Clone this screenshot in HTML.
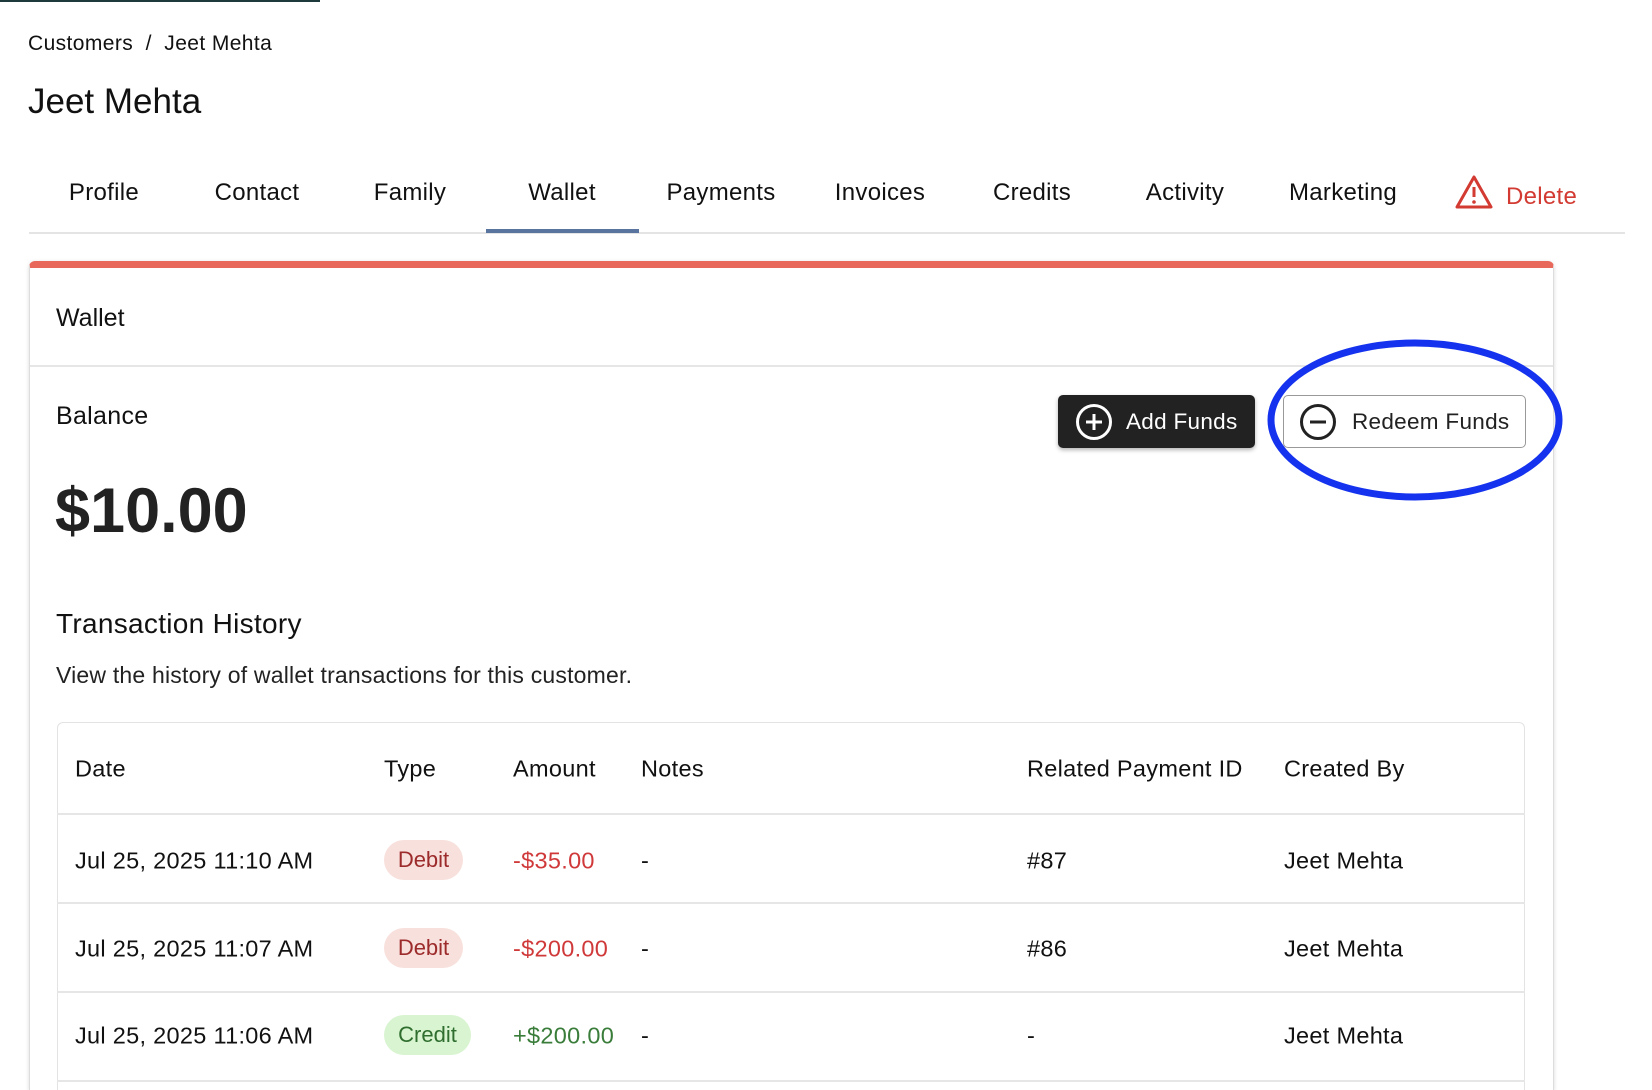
<!DOCTYPE html>
<html style="width:1652px;height:1090px;overflow:hidden"><head><meta charset="utf-8"><style>
*{box-sizing:border-box;margin:0;padding:0}
body{width:1652px;height:1090px;overflow:hidden;background:#fff;font-family:"Liberation Sans",Arial,sans-serif;color:#111;position:relative}
.a{position:absolute;white-space:nowrap}
.tab{position:absolute;top:179px;font-size:24px;letter-spacing:.3px;transform:translateX(-50%)}
.card{position:absolute;left:29px;top:261px;width:1525px;height:829px;border:1px solid #ddd;border-bottom:none;border-top:7px solid #e8695c;border-radius:6px 6px 0 0;box-shadow:0 1px 4px rgba(0,0,0,.15)}
.tbl{position:absolute;left:57px;top:722px;width:1468px;height:368px;border:1px solid #e3e3e3;border-bottom:none;border-radius:6px 6px 0 0}
.hl{position:absolute;left:57px;width:1468px;height:2px;background:#e6e6e6}
.t{position:absolute;font-size:23.5px;letter-spacing:.3px;transform:translateY(-50%)}
.badge{position:absolute;height:40px;border-radius:20px;font-size:22px;line-height:40px;text-align:center;transform:translateY(-50%)}
</style></head><body>
<div class="a" style="left:0;top:0;width:320px;height:2px;background:#1e3a3a"></div>
<div class="a" style="left:28px;top:32px;font-size:21px;letter-spacing:.4px">Customers&nbsp;&nbsp;/&nbsp;&nbsp;Jeet Mehta</div>
<div class="a" style="left:28px;top:82px;font-size:35px">Jeet Mehta</div>
<div class="tab" style="left:104px">Profile</div>
<div class="tab" style="left:257px">Contact</div>
<div class="tab" style="left:410px">Family</div>
<div class="tab" style="left:562px">Wallet</div>
<div class="tab" style="left:721px">Payments</div>
<div class="tab" style="left:880px">Invoices</div>
<div class="tab" style="left:1032px">Credits</div>
<div class="tab" style="left:1185px">Activity</div>
<div class="tab" style="left:1343px">Marketing</div>
<svg class="a" style="left:1455px;top:175px" width="38" height="34" viewBox="0 0 38 34"><path d="M19 2 L36 32 L2 32 Z" fill="none" stroke="#d23a32" stroke-width="3" stroke-linejoin="round"/><path d="M19 12v10" stroke="#d23a32" stroke-width="3"/><circle cx="19" cy="27" r="1.8" fill="#d23a32"/></svg>
<div class="a" style="left:1506px;top:183px;font-size:24px;letter-spacing:.3px;color:#d23a32">Delete</div>
<div class="a" style="left:29px;top:232px;width:1596px;height:2px;background:#e4e4e4"></div>
<div class="a" style="left:486px;top:229px;width:153px;height:4px;background:#5a74a0"></div>
<div class="card"></div>
<div class="a" style="left:56px;top:304px;font-size:25px">Wallet</div>
<div class="a" style="left:30px;top:365px;width:1523px;height:2px;background:#e6e6e6"></div>
<div class="a" style="left:56px;top:402px;font-size:25px;letter-spacing:.3px">Balance</div>
<div class="a" style="left:55px;top:475px;font-size:63px;font-weight:bold;color:#222">$10.00</div>
<div class="a" style="left:1058px;top:395px;width:197px;height:53px;background:#222;border-radius:5px;box-shadow:0 2px 4px rgba(0,0,0,.3);color:#fff;font-size:22.5px;letter-spacing:.3px">
<svg class="a" style="left:17px;top:8px" width="38" height="38" viewBox="0 0 38 38"><circle cx="19" cy="19" r="16.5" fill="none" stroke="#fff" stroke-width="3"/><path d="M19 11v16M11 19h16" stroke="#fff" stroke-width="3"/></svg>
<span class="a" style="left:68px;top:14px">Add Funds</span></div>
<div class="a" style="left:1283px;top:395px;width:243px;height:53px;background:#fff;border:1px solid #999;border-radius:5px;font-size:22.5px;letter-spacing:.3px;color:#222">
<svg class="a" style="left:15px;top:7px" width="38" height="38" viewBox="0 0 38 38"><circle cx="19" cy="19" r="16.5" fill="none" stroke="#222" stroke-width="3"/><path d="M11 19h16" stroke="#222" stroke-width="3"/></svg>
<span class="a" style="left:68px;top:13px">Redeem Funds</span></div>
<svg class="a" style="left:1262px;top:335px" width="310" height="175"><ellipse cx="153" cy="85" rx="144" ry="77" fill="none" stroke="#1533ee" stroke-width="7"/></svg>
<div class="a" style="left:56px;top:608px;font-size:28px;letter-spacing:.3px">Transaction History</div>
<div class="a" style="left:56px;top:662px;font-size:23px;letter-spacing:.2px;color:#222">View the history of wallet transactions for this customer.</div>
<div class="tbl"></div>
<div class="hl" style="top:813px"></div>
<div class="hl" style="top:902px"></div>
<div class="hl" style="top:991px"></div>
<div class="hl" style="top:1080px"></div>
<div class="t" style="left:75px;top:769px">Date</div>
<div class="t" style="left:384px;top:769px">Type</div>
<div class="t" style="left:513px;top:769px">Amount</div>
<div class="t" style="left:641px;top:769px">Notes</div>
<div class="t" style="left:1027px;top:769px">Related Payment ID</div>
<div class="t" style="left:1284px;top:769px">Created By</div>

<div class="t" style="left:75px;top:861px">Jul 25, 2025 11:10 AM</div>
<div class="badge" style="left:384px;top:860px;width:79px;background:#f8e0dc;color:#9c2b2b">Debit</div>
<div class="t" style="left:513px;top:861px;color:#d0393a">-$35.00</div>
<div class="t" style="left:641px;top:861px">-</div>
<div class="t" style="left:1027px;top:861px">#87</div>
<div class="t" style="left:1284px;top:861px">Jeet Mehta</div>

<div class="t" style="left:75px;top:949px">Jul 25, 2025 11:07 AM</div>
<div class="badge" style="left:384px;top:948px;width:79px;background:#f8e0dc;color:#9c2b2b">Debit</div>
<div class="t" style="left:513px;top:949px;color:#d0393a">-$200.00</div>
<div class="t" style="left:641px;top:949px">-</div>
<div class="t" style="left:1027px;top:949px">#86</div>
<div class="t" style="left:1284px;top:949px">Jeet Mehta</div>

<div class="t" style="left:75px;top:1036px">Jul 25, 2025 11:06 AM</div>
<div class="badge" style="left:384px;top:1035px;width:87px;background:#d8f4d0;color:#2f6e2f">Credit</div>
<div class="t" style="left:513px;top:1036px;color:#3a7d3a">+$200.00</div>
<div class="t" style="left:641px;top:1036px">-</div>
<div class="t" style="left:1027px;top:1036px">-</div>
<div class="t" style="left:1284px;top:1036px">Jeet Mehta</div>
</body></html>
